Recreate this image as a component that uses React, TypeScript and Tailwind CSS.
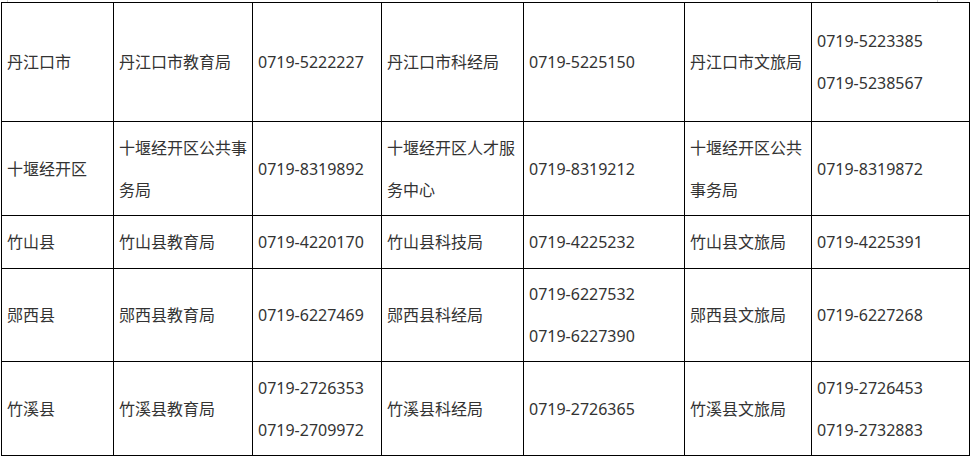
import React from "react";

type Cell = string[][]; // cell -> lines(paragraphs) ; each paragraph may have explicit lines

const rows: string[][][] = [
  [["丹江口市"], ["丹江口市教育局"], ["0719-5222227"], ["丹江口市科经局"], ["0719-5225150"], ["丹江口市文旅局"], ["0719-5223385", "0719-5238567"]],
  [["十堰经开区"], ["十堰经开区公共事", "务局"], ["0719-8319892"], ["十堰经开区人才服", "务中心"], ["0719-8319212"], ["十堰经开区公共", "事务局"], ["0719-8319872"]],
  [["竹山县"], ["竹山县教育局"], ["0719-4220170"], ["竹山县科技局"], ["0719-4225232"], ["竹山县文旅局"], ["0719-4225391"]],
  [["郧西县"], ["郧西县教育局"], ["0719-6227469"], ["郧西县科经局"], ["0719-6227532", "0719-6227390"], ["郧西县文旅局"], ["0719-6227268"]],
  [["竹溪县"], ["竹溪县教育局"], ["0719-2726353", "0719-2709972"], ["竹溪县科经局"], ["0719-2726365"], ["竹溪县文旅局"], ["0719-2726453", "0719-2732883"]],
];

export default function App() {
  return (
    <div
      className="w-[972px] h-[459px] bg-white text-[#333333] overflow-hidden"
      style={{ fontFamily: '"Noto Sans", "Noto Sans CJK SC", sans-serif' }}
    >
      <div className="flex h-[2px]">
        <div className="ml-[7px] w-px h-[2px] bg-[#d0d0d0]" />
        <div className="ml-[929px] w-px h-[2px] bg-[#d0d0d0]" />
      </div>
      <div className="ml-px grid w-[969px] grid-cols-[111px_138px_128px_141px_160px_126px_157px] grid-rows-[118px_93px_52px_92px_93px] gap-px bg-black p-px">
        {rows.map((row, ri) =>
          row.map((cell, ci) => (
            <div
              key={`${ri}-${ci}`}
              className="flex flex-col justify-center bg-white pl-[5px] text-[16px] leading-[42px] whitespace-nowrap"
            >
              {cell.map((line, li) => (
                <div key={li}>{line}</div>
              ))}
            </div>
          ))
        )}
      </div>
    </div>
  );
}
